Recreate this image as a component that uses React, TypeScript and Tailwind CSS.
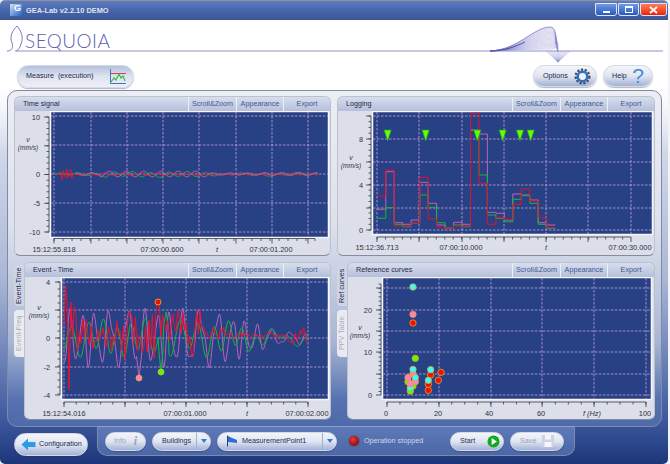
import type { ReactNode } from "react";

const GRID = "#c9a2dc";
const PINK = "#c060b8";
const GREEN = "#12b83a";
const RED = "#f01030";

type ChartProps = {
  id: string;
  box: [number, number, number, number];
  plot: [number, number, number, number];
  gridX: number[];
  gridY: number[];
  axisX: number;
  axisY: number;
  ticksX: number[];
  minorX: number[];
  ticksY: number[];
  minorY: number[];
  labelsY: [string, number][];
  labelRight: number;
  labelsX: [string, number][];
  labelXY: number;
  unitX: number;
  unitY: number;
  children?: ReactNode;
};

function range(from: number, to: number, step: number) {
  const out: number[] = [];
  for (let v = from; v <= to + 0.001; v += step) out.push(v);
  return out;
}

function line(fn: (x: number) => number, x0: number, x1: number, step = 1) {
  return range(x0, x1, step)
    .map((x) => `${x.toFixed(1)},${fn(x).toFixed(1)}`)
    .join(" ");
}

function noise(x: number) {
  const s = Math.sin(x * 12.9898) * 43758.5453;
  return s - Math.floor(s) - 0.5;
}

function Chart(p: ChartProps) {
  const [bx, by, bw, bh] = p.box;
  const [px, py, pw, ph] = p.plot;
  return (
    <svg width={bw} height={bh} viewBox={`${bx} ${by} ${bw} ${bh}`} className="block" fontFamily="Liberation Sans, sans-serif">
      <defs>
        <clipPath id={p.id}>
          <rect x={px} y={py} width={pw} height={ph} />
        </clipPath>
      </defs>
      <rect x={px - 0.5} y={py - 0.5} width={pw + 1} height={ph + 1} fill="#284184" stroke="#f4f6fb" strokeWidth="1.5" />
      {p.gridX.map((x) => (
        <line key={x} x1={x} x2={x} y1={py} y2={py + ph} stroke={GRID} strokeWidth="0.8" strokeDasharray="2.5 1.5" />
      ))}
      {p.gridY.map((y) => (
        <line key={y} x1={px} x2={px + pw} y1={y} y2={y} stroke={GRID} strokeWidth="0.8" strokeDasharray="2.5 1.5" />
      ))}
      <g clipPath={`url(#${p.id})`}>{p.children}</g>
      <g stroke="#333a48" strokeWidth="0.8">
        <line x1={p.axisY} x2={p.axisY} y1={Math.min(...p.ticksY, ...p.minorY)} y2={Math.max(...p.ticksY, ...p.minorY)} />
        <line x1={Math.min(...p.ticksX)} x2={Math.max(...p.ticksX, ...p.minorX)} y1={p.axisX} y2={p.axisX} />
        {p.ticksY.map((y) => (
          <line key={y} x1={p.axisY - 5} x2={p.axisY} y1={y} y2={y} />
        ))}
        {p.minorY.map((y) => (
          <line key={y} x1={p.axisY - 2.5} x2={p.axisY} y1={y} y2={y} />
        ))}
        {p.ticksX.map((x) => (
          <line key={x} x1={x} x2={x} y1={p.axisX} y2={p.axisX + 5} />
        ))}
        {p.minorX.map((x) => (
          <line key={x} x1={x} x2={x} y1={p.axisX} y2={p.axisX + 2.5} />
        ))}
      </g>
      <g fontSize="7.4" fill="#2c3240">
        {p.labelsY.map(([t, y]) => (
          <text key={t} x={p.labelRight} y={y + 2.6} textAnchor="end">
            {t}
          </text>
        ))}
        {p.labelsX.map(([t, x]) => (
          <text key={t} x={x} y={p.labelXY} textAnchor="middle" fontStyle={t === "t" || t.startsWith("f") ? "italic" : undefined}>
            {t}
          </text>
        ))}
        <text x={p.unitX} y={p.unitY} textAnchor="middle" fontStyle="italic" fontSize="7">
          v
        </text>
        <text x={p.unitX} y={p.unitY + 8} textAnchor="middle" fontStyle="italic" fontSize="6.6">
          (mm/s)
        </text>
      </g>
    </svg>
  );
}

function TimeSignal() {
  const env = (x: number) => (x < 100 ? 1.4 : x < 210 ? 2.8 : x < 250 ? 1 : 1.3);
  const pink = (x: number) => 174 - env(x) * Math.sin((x - 53) / 2.75);
  const green = (x: number) => 174.4 - env(x) * 0.85 * Math.sin((x - 55) / 2.9) - 0.6 * Math.sin(x / 9);
  const red = (x: number) => {
    const burst = x > 60 && x < 72 ? 5 * Math.sin(x * 1.9) : 0;
    return 174.3 - burst - env(x) * 0.45 * Math.sin((x - 50) / 2.7) - noise(x) * 0.3;
  };
  return (
    <Chart
      id="c1"
      box={[15, 111, 315, 144]}
      plot={[51, 112, 277, 125]}
      gridX={[54, 91, 127, 163, 199, 236, 272, 308]}
      gridY={[116, 145, 174, 203, 232]}
      axisX={238.5}
      axisY={49}
      ticksX={[54, 91, 127, 163, 199, 236, 272, 308]}
      minorX={range(54, 318, 9)}
      ticksY={[117, 145.8, 174.5, 203.3, 232]}
      minorY={range(117, 232, 5.75)}
      labelsY={[["10", 117], ["0", 174.5], ["-5", 203.3], ["-10", 232]]}
      labelRight={40}
      labelsX={[["15:12:55.818", 54], ["07:00:00.600", 162], ["t", 217], ["07:00:01.200", 271]]}
      labelXY={252}
      unitX={28}
      unitY={142}
    >
      <polyline points={line(green, 55, 318, 0.7)} fill="none" stroke={GREEN} strokeWidth="1" />
      <polyline points={line(red, 55, 318, 1.2)} fill="none" stroke={RED} strokeWidth="1" />
      <polyline points={line(pink, 76, 318, 0.7)} fill="none" stroke={PINK} strokeWidth="1" />
    </Chart>
  );
}

const logRed = [303, 225, 393, 393, 385, 247, 372, 397, 400, 393, 393, 55, 265, 388, 368, 373, 328, 282, 318, 368, 398];
const logPink = [343, 230, 383, 388, 375, 262, 325, 390, 400, 382, 388, 105, 117, 352, 355, 375, 297, 300, 315, 383, 390];
const logGreen = [370, 338, 388, 395, 385, 300, 337, 383, 400, 390, 395, 106, 240, 360, 370, 380, 313, 302, 325, 388, 400];
const triangles = [158, 272, 427, 503, 555, 587];

function steps(values: number[]) {
  return values
    .map((z, i) => {
      const y = 95 + z / 3;
      const x = 377.3 + i * 8.47;
      return `${x.toFixed(1)},${y.toFixed(1)} ${(x + 8.47).toFixed(1)},${y.toFixed(1)}`;
    })
    .join(" ");
}

function Logging() {
  return (
    <Chart
      id="c2"
      box={[338, 111, 316, 144]}
      plot={[373, 112, 279, 122]}
      gridX={[377, 419, 462, 504, 546, 588, 631]}
      gridY={[116, 139, 162, 185, 208, 230]}
      axisX={237}
      axisY={371}
      ticksX={[377, 419, 462, 504, 546, 588, 631]}
      minorX={range(377, 631, 8.47)}
      ticksY={[116, 139, 162, 185, 208, 230]}
      minorY={range(116, 230, 5.7)}
      labelsY={[["8", 139], ["4", 185], ["0", 230]]}
      labelRight={363}
      labelsX={[["15:12:36.713", 377], ["07:00:10.000", 461], ["t", 546], ["07:00:30.000", 630]]}
      labelXY={250}
      unitX={351}
      unitY={160}
    >
      <polyline points={steps(logPink)} fill="none" stroke={PINK} strokeWidth="1" />
      <polyline points={steps(logGreen)} fill="none" stroke={GREEN} strokeWidth="1" />
      <polyline points={steps(logRed)} fill="none" stroke="#e0102c" strokeWidth="1" />
      {triangles.map((z) => {
        const x = 335 + z / 3;
        return (
          <polygon key={z} points={`${x - 3.6},130 ${x + 3.6},130 ${x},141`} fill="#66ff00" stroke="#1f9a3a" strokeWidth="0.7" />
        );
      })}
    </Chart>
  );
}

function EventTime() {
  const env = (x: number) => (x < 215 ? 1 : Math.max(0.22, 1 - (x - 215) / 85));
  const pink = (x: number) => {
    let v = 24 * env(x) * Math.sin((x - 64) / 2.35 + 1.4 * Math.sin(x / 13)) + 6 * env(x) * Math.sin(x / 1.2);
    if (Math.abs(x - 139) < 3) v = -40 + Math.abs(x - 139) * 9;
    return 337 - v;
  };
  const green = (x: number) => {
    let v = 15 * env(x) * Math.sin((x - 66) / 2.5 + 1.2 * Math.sin(x / 19)) + 5 * Math.sin(x / 7);
    if (Math.abs(x - 161) < 2.5) v = -34 + Math.abs(x - 161) * 10;
    if (Math.abs(x - 166) < 2.5) v = 26 - Math.abs(x - 166) * 6;
    return 337 - v;
  };
  const red = (x: number) => {
    const amp = x < 85 ? 48 : x < 125 ? 26 : x < 205 ? 42 : x < 225 ? 12 : x > 285 ? 14 : 5;
    let v = amp * noise(x * 0.61) * 1.25 + 3;
    if (Math.abs(x - 65) < 1) v = 52;
    if (Math.abs(x - 68.5) < 1) v = -52;
    if (Math.abs(x - 71) < 1) v = 36;
    if (Math.abs(x - 158) < 1.5) v = 36;
    return 337 - v;
  };
  return (
    <Chart
      id="c3"
      box={[25, 276, 305, 143]}
      plot={[62, 277, 266, 121]}
      gridX={[64, 125, 186, 247, 308]}
      gridY={[281, 309, 337, 366, 394]}
      axisX={401}
      axisY={60}
      ticksX={[64, 125, 186, 247, 308]}
      minorX={range(64, 308, 12.2)}
      ticksY={[281, 309, 337, 366, 394]}
      minorY={range(281, 394, 7)}
      labelsY={[["4", 281], ["0", 337], ["-2", 366], ["-4", 394]]}
      labelRight={50}
      labelsX={[["15:12:54.016", 64], ["07:00:01.000", 185], ["t", 247], ["07:00:02.000", 307]]}
      labelXY={415}
      unitX={39}
      unitY={309}
    >
      <polyline points={line(pink, 64, 308, 0.6)} fill="none" stroke={PINK} strokeWidth="1" />
      <polyline points={line(green, 64, 308, 0.6)} fill="none" stroke={GREEN} strokeWidth="1" />
      <polyline points={line(red, 64, 308, 1.7)} fill="none" stroke={RED} strokeWidth="1" />
      <circle cx="158" cy="301" r="3" fill="#ee1100" stroke="#e8a030" strokeWidth="0.9" />
      <circle cx="139" cy="377" r="3" fill="#ff80c0" stroke="#e8a030" strokeWidth="0.9" />
      <circle cx="161" cy="371" r="3" fill="#55ff00" stroke="#b0c040" strokeWidth="0.9" />
    </Chart>
  );
}

const refDots: [number, number, string][] = [
  [237, 338, "#ff80c0"],
  [222, 362, "#55ff00"],
  [237, 375, "#55ff00"],
  [229, 390, "#55ff00"],
  [229, 380, "#33ffff"],
  [222, 350, "#ff80c0"],
  [244, 362, "#ff80c0"],
  [229, 368, "#ff80c0"],
  [244, 350, "#33ffff"],
  [237, 325, "#33ffff"],
  [290, 342, "#ee1100"],
  [290, 326, "#33ffff"],
  [321, 334, "#ee1100"],
  [313, 358, "#ee1100"],
  [283, 388, "#ee1100"],
  [283, 370, "#ee1100"],
  [283, 358, "#33ffff"],
  [244, 292, "#55ff00"],
  [237, 186, "#ee1100"],
  [237, 160, "#ff80c0"],
  [237, 78, "#33ffff"],
];

function RefCurves() {
  return (
    <Chart
      id="c4"
      box={[349, 276, 305, 143]}
      plot={[384, 277, 268, 121]}
      gridX={[388, 440, 492, 543, 595, 647]}
      gridY={[287, 309, 330, 351, 373, 394]}
      axisX={401}
      axisY={382}
      ticksX={[388, 440, 492, 543, 595, 647]}
      minorX={range(388, 647, 12.95)}
      ticksY={[287, 309, 330, 351, 373, 394]}
      minorY={range(283, 394, 4.3)}
      labelsY={[["20", 309], ["10", 351], ["0", 394]]}
      labelRight={373}
      labelsX={[["0", 387], ["20", 439], ["40", 490], ["60", 542], ["f (Hz)", 593], ["100", 646]]}
      labelXY={415}
      unitX={361}
      unitY={329}
    >
      {refDots.map(([zx, zy, c]) => (
        <circle
          key={`${zx}-${zy}`}
          cx={335 + zx / 3}
          cy={260 + zy / 3}
          r="3.2"
          fill={c}
          stroke="#e8a030"
          strokeWidth="0.8"
        />
      ))}
    </Chart>
  );
}

function PanelBar({ title }: { title: string }) {
  return (
    <div className="flex h-[14px] items-stretch rounded-t-[6px] bg-gradient-to-b from-[#d8deee] to-[#b4bfda] text-[7.2px] leading-[14px]">
      <div className="flex-1 pl-[8px] font-medium text-[#1f2a44]">{title}</div>
      <div className="w-[48px] border-l border-[#eef0f6] text-center text-[#3f5a92]">Scroll&amp;Zoom</div>
      <div className="w-[47px] border-l border-[#eef0f6] text-center text-[#3f5a92]">Appearance</div>
      <div className="w-[47px] border-l border-[#eef0f6] text-center text-[#3f5a92]">Export</div>
    </div>
  );
}

function Panel({ title, children }: { title: string; children: ReactNode }) {
  return (
    <section className="min-w-0 flex-1 rounded-[6px] border border-[#bcc1cf] border-b-[#858ba0] bg-[#dcdfe9]">
      <PanelBar title={title} />
      {children}
    </section>
  );
}

function SideTabs({ active, other }: { active: string; other: string }) {
  return (
    <div className="flex w-[10px] shrink-0 flex-col gap-[4px] pt-[3px] text-[7.2px] leading-[10px]">
      <div className="flex h-[41px] rotate-180 items-center justify-center rounded-r-[4px] bg-[#cfd5e4] text-[#1f2a44] [writing-mode:vertical-rl]">
        {active}
      </div>
      <div className="flex h-[47px] rotate-180 items-center justify-center rounded-r-[4px] bg-[#e9ebf1] text-[#a9adba] [writing-mode:vertical-rl]">
        {other}
      </div>
    </div>
  );
}

function Pill({ className, children, tone = "bg-gradient-to-b from-[#f3f5fa] via-[#e0e5f1] to-[#a3b2d6]" }: { className: string; children: ReactNode; tone?: string }) {
  return (
    <div
      className={`flex items-center rounded-full border border-[#d4d9e6] text-[7.2px] text-[#1d2a4c] shadow-[0_1px_1px_rgba(40,50,90,0.35)] ${tone} ${className}`}
    >
      {children}
    </div>
  );
}

function Swoosh() {
  const ps = range(27.5, 50, 1.2);
  return (
    <g fill="none" stroke="#8082cc" strokeWidth="0.32">
      {ps.map((p) => (
        <path key={p} d={`M490 51 C518 50 534 ${p} 550 ${p} C557 ${p} 556 44 558 ${44 + (p - 27) * 0.4}`} />
      ))}
      {range(546, 570, 1.6).map((x) => (
        <path key={x} d={`M${x} 51 L558 62`} />
      ))}
      <path d="M490 51 C518 50 534 27 550 27 C556 27 556 36 556 44" stroke="#6d70bf" strokeWidth="0.7" />
      <path d="M490 51 C505 50.5 515 47 525 42" stroke="#4d50a8" strokeWidth="1" />
    </g>
  );
}

function Header() {
  return (
    <svg width="660" height="45" viewBox="3 20 660 45" className="block">
      <path
        d="M7 51 C11 51 14 48 12 43 C9 36 13 30 17 26 C21 31 24 37 21 44 C20 47 19 50 16 51"
        fill="none"
        stroke="#6b6fb8"
        strokeWidth="0.9"
      />
      <line x1="15" x2="663" y1="51" y2="51" stroke="#8f90cc" strokeWidth="1" />
      <text x="25" y="47.5" fontFamily="Lato, sans-serif" fontWeight="300" fontSize="19" fill="#5d60ad" textLength="85">
        SEQUOIA
      </text>
      <Swoosh />
    </svg>
  );
}

function WindowButton({ className, children }: { className: string; children: ReactNode }) {
  return (
    <div className={`flex h-[13px] items-center justify-center rounded-b-[3px] border border-[#dfe6f6] ${className}`}>
      {children}
    </div>
  );
}

function TitleBar() {
  return (
    <div className="flex h-[20px] shrink-0 items-start rounded-t-[5px] border-t border-[#8c919e] bg-gradient-to-b from-[#5f7cbd] via-[#4665ab] to-[#3c5594] pl-[10px] pr-[1px]">
      <div className="mt-[3px] flex h-[12px] w-[12px] items-start justify-end bg-gradient-to-br from-[#cfe0f6] to-[#1f5fc0] pr-[1px] text-[9px] font-bold leading-[9px] text-white">
        G
      </div>
      <div className="ml-[4px] mt-[3px] text-[7.4px] font-bold leading-[14px] text-[#dfe5f3]">
        GEA-Lab v2.2.10 DEMO
      </div>
      <div className="ml-auto mt-[2px] flex gap-[1px]">
        <WindowButton className="w-[22px] bg-gradient-to-b from-[#6f9ae6] to-[#2657c0]">
          <div className="mt-[5px] h-[2px] w-[7px] bg-white" />
        </WindowButton>
        <WindowButton className="w-[21px] bg-gradient-to-b from-[#6f9ae6] to-[#2657c0]">
          <div className="h-[7px] w-[8px] border border-t-2 border-white" />
        </WindowButton>
        <WindowButton className="w-[27px] bg-gradient-to-b from-[#ff7a50] to-[#e81c04]">
          <svg width="9" height="8" viewBox="0 0 9 8">
            <path d="M1 1 L8 7 M8 1 L1 7" stroke="#fff" strokeWidth="1.8" />
          </svg>
        </WindowButton>
      </div>
    </div>
  );
}

function TopRow() {
  return (
    <div className="flex h-[25px] items-start pl-[14px] pr-[15px]">
      <Pill className="h-[23px] w-[117px] pl-[8px] pr-[7px]" tone="bg-gradient-to-b from-[#b4c1df] via-[#dfe3ef] to-[#eef0f6]">
        <span className="whitespace-pre">Measure  (execution)</span>
        <svg width="16" height="15" viewBox="0 0 16 15" className="ml-auto">
          <path d="M0.5 0 V14.5 H16" fill="none" stroke="#3b73c9" />
          <path d="M0 4.5 H16" stroke="#d84050" />
          <path d="M1 13 L4 9 L6 11 L9 5 L11 9 L13 7 L15 12" fill="none" stroke="#3fb83f" strokeWidth="1.2" />
        </svg>
      </Pill>
      <Pill className="ml-auto h-[22px] w-[64px] pl-[9px] pr-[5px]">
        Options
        <svg width="17" height="17" viewBox="0 0 18 18" className="ml-auto">
          <circle cx="9" cy="9" r="7.2" fill="none" stroke="#4b5160" strokeWidth="2.6" strokeDasharray="2.4 1.6" />
          <circle cx="9" cy="9" r="5" fill="#eef3fb" stroke="#2f6fc4" strokeWidth="2.6" />
        </svg>
      </Pill>
      <Pill className="ml-[6px] h-[22px] w-[50px] pl-[8px] pr-[8px]">
        Help
        <span className="ml-auto text-[21px] leading-[18px] text-[#3d90d4]">?</span>
      </Pill>
    </div>
  );
}

function Caret() {
  return (
    <div className="ml-auto flex h-full w-[14px] items-center justify-center border-l border-[#9fb0d2]">
      <div className="h-0 w-0 border-x-[3px] border-t-[4px] border-x-transparent border-t-[#2f7fd4]" />
    </div>
  );
}

function Footer() {
  return (
    <div className="flex h-[37px] items-start">
      <div className="flex w-[94px] shrink-0 pl-[11px] pt-[6px]">
        <Pill className="h-[23px] w-[74px] gap-[3px] pl-[6px]">
          <svg width="15" height="13" viewBox="0 0 15 13">
            <path d="M0.5 6.5 L7 0.5 V4 H14.5 V9 H7 V12.5 Z" fill="#2f9ae6" />
          </svg>
          Configuration
        </Pill>
      </div>
      <div className="-mt-px flex h-[30px] w-[478px] shrink-0 items-center rounded-b-[10px] border border-[#7f8aa6] border-t-[#8ea0cb] bg-gradient-to-b from-[#5e79b6] to-[#4b67a8] pl-[7px]">
        <Pill className="h-[19px] w-[41px] justify-between px-[8px] text-[#9aa2b6]">
          Info
          <span className="font-['Liberation_Serif',serif] text-[12px] font-bold italic text-[#9aa2b6]">i</span>
        </Pill>
        <Pill className="ml-[6px] h-[19px] w-[59px] pl-[9px]">
          Buildings
          <Caret />
        </Pill>
        <Pill className="ml-[6px] h-[19px] w-[120px] pl-[8px]">
          <svg width="12" height="12" viewBox="0 0 12 12" className="mr-[4px]">
            <path d="M1.5 0.5 V11.5" stroke="#1c3f8f" />
            <path d="M2 1 L6 3 L11 5 L11 8 L2 7 Z" fill="#2f6fd4" />
          </svg>
          MeasurementPoint1
          <Caret />
        </Pill>
        <div className="ml-[12px] h-[10px] w-[10px] rounded-full bg-[radial-gradient(circle_at_40%_35%,#e83c3c,#8c0a0a_75%)] ring-1 ring-[#55607e]" />
        <span className="ml-[5px] w-[86px] text-[7.2px] text-[#d0d8ea]">Operation stopped</span>
        <Pill className="h-[19px] w-[54px] pl-[9px] pr-[3px] font-medium">
          Start
          <svg width="13" height="13" viewBox="0 0 13 13" className="ml-auto">
            <circle cx="6.5" cy="6.5" r="6" fill="#12a820" />
            <path d="M4.6 3 L10 6.5 L4.6 10 Z" fill="#f2fff2" />
          </svg>
        </Pill>
        <Pill className="ml-[6px] h-[19px] w-[54px] pl-[9px] pr-[9px] text-[#9aa2b6]">
          Save
          <svg width="12" height="12" viewBox="0 0 12 12" className="ml-auto">
            <path d="M0 0 H12 V12 H0 Z" fill="#cdd3e0" />
            <path d="M3 0 H9 V4.5 H3 Z M2.5 7 H9.5 V12 H2.5 Z" fill="#f4f6fa" />
          </svg>
        </Pill>
      </div>
    </div>
  );
}

export default function App() {
  return (
    <div className="h-[464px] w-[670px] overflow-hidden bg-[#f2f3f6] font-['Liberation_Sans',sans-serif]">
      <div className="flex h-[464px] w-[668px] flex-col rounded-b-[5px] bg-[linear-gradient(#eef1f8_0,#e2e6f1_20%,#aab7d6_60%,#3f5aa0_90%,#1d3679_100%)]">
        <TitleBar />
        <div className="flex flex-1 flex-col bg-[linear-gradient(#ffffff_0,#ffffff_15%,transparent_30%)] pl-[3px]">
          <Header />
          <TopRow />
          <main className="ml-[4px] h-[337px] w-[655px] rounded-[10px] border border-[#7f8aa6] bg-[linear-gradient(#eceef4_0,#dde1ec_40%,#a8b6d4_75%,#5672b0_92%,#4e6aaa_100%)] pl-[6px] pt-[5px]">
            <div className="grid grid-cols-[317px_318px] grid-rows-[160px_158px] gap-x-[6px] gap-y-[6px]">
              <div className="flex">
                <Panel title="Time signal">
                  <TimeSignal />
                </Panel>
              </div>
              <div className="flex">
                <Panel title="Logging">
                  <Logging />
                </Panel>
              </div>
              <div className="flex">
                <SideTabs active="Event-Time" other="Event-Freq" />
                <Panel title="Event - Time">
                  <EventTime />
                </Panel>
              </div>
              <div className="flex">
                <SideTabs active="Ref curves" other="PPV Table" />
                <Panel title="Reference curves">
                  <RefCurves />
                </Panel>
              </div>
            </div>
          </main>
          <Footer />
        </div>
      </div>
    </div>
  );
}
